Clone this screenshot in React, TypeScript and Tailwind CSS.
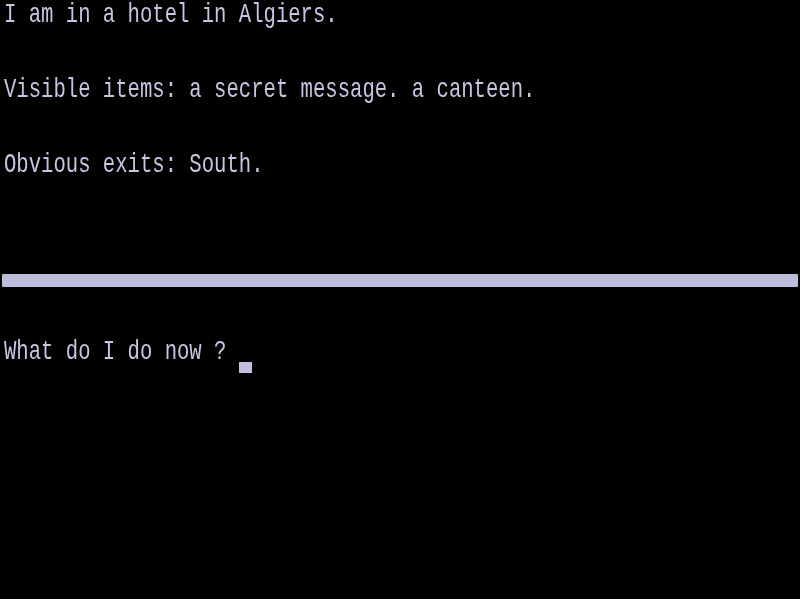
const lines = [
  "I am in a hotel in Algiers.",
  "",
  "Visible items: a secret message. a canteen.",
  "",
  "Obvious exits: South.",
  "",
  "",
];

function Row({ text }: { text: string }) {
  return (
    <div className="h-[37.4px] flex items-start pl-[4px]">
      <span className="block origin-top scale-y-[1.35] whitespace-pre leading-[22px]">{text}</span>
    </div>
  );
}

export default function App() {
  return (
    <div className="w-[800px] h-[599px] bg-black overflow-hidden">
      <div
        className="h-full text-[#c6c6e2] text-[20.6px] blur-[0.4px]"
        style={{ fontFamily: '"Liberation Mono", "DejaVu Sans Mono", monospace' }}
      >
        {lines.map((t, i) => (
          <Row key={i} text={t} />
        ))}

        {/* divider bar */}
        <div className="h-[37.4px] pt-[12px] px-[2px]">
          <div className="h-[13px] bg-[#bdbddb] rounded-[1px]" />
        </div>

        <div className="h-[37.4px]" />

        {/* prompt */}
        <div className="h-[37.4px] flex items-start pl-[4px]">
          <span className="block origin-top scale-y-[1.35] whitespace-pre leading-[22px]">What do I do now ? </span>
          <span className="mt-[25px] w-[13px] h-[11px] bg-[#c0c0de]" />
        </div>
      </div>
    </div>
  );
}
